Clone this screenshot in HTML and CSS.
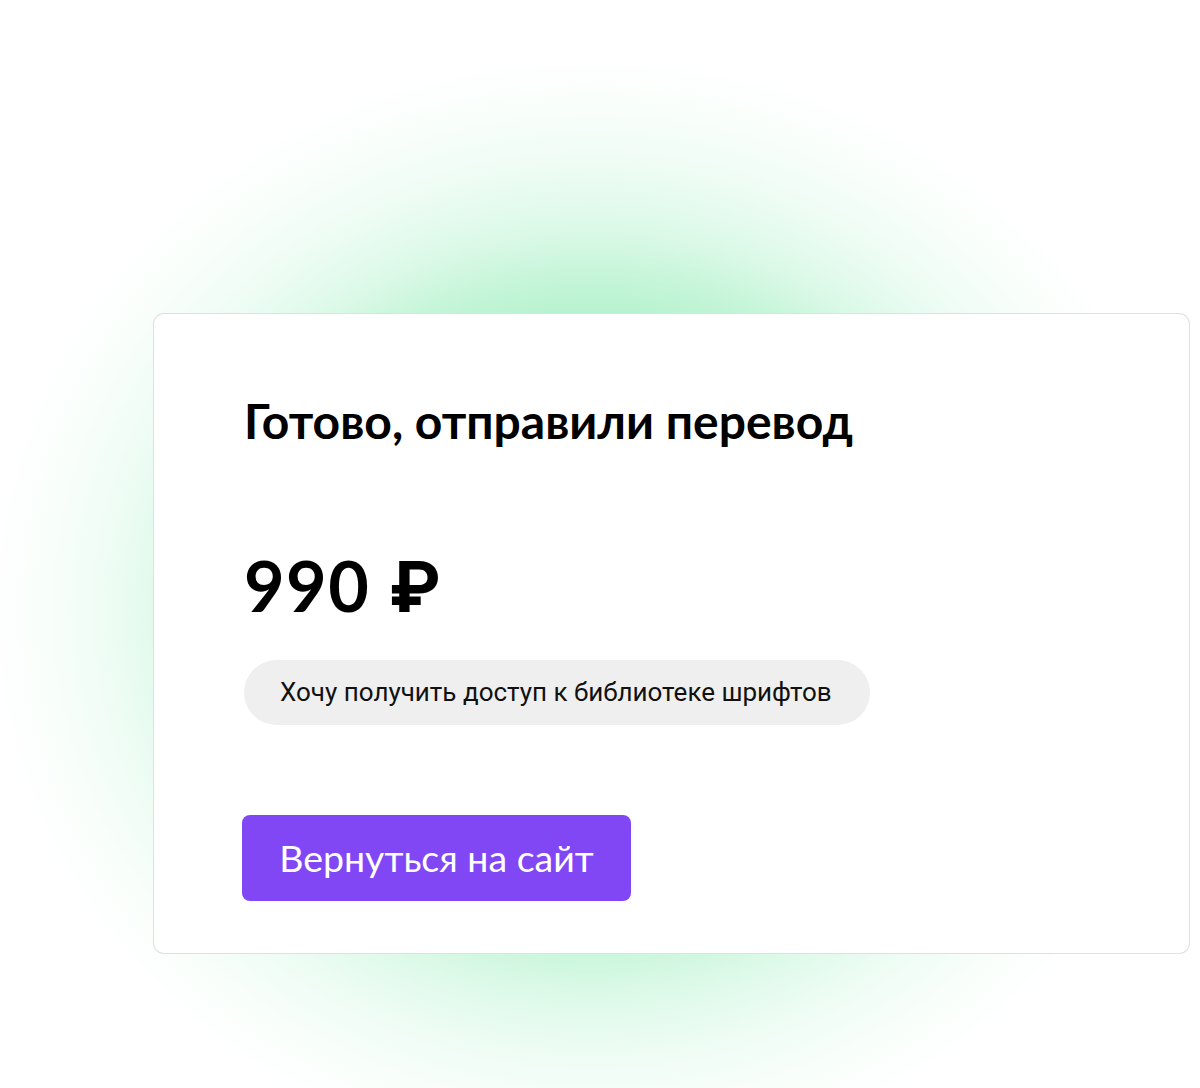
FILE: index.html
```html
<!DOCTYPE html>
<html lang="ru">
<head>
<meta charset="utf-8">
<title>Готово</title>
<link rel="stylesheet" href="styles.css">
</head>
<body>
<main class="page">
  <section class="card">
    <h1 class="title">Готово, отправили перевод</h1>
    <div class="amount">990 ₽</div>
    <div class="note">Хочу получить доступ к библиотеке шрифтов</div>
    <a class="btn" href="#">Вернуться на сайт</a>
  </section>
</main>
</body>
</html>
```
FILE: styles.css
```css
html, body {
  margin: 0;
  padding: 0;
  background: #fff;
}

.page {
  width: 1200px;
  height: 1088px;
  box-sizing: border-box;
  padding: 313px 11px 0 153px;
  background:
    radial-gradient(ellipse 610px 560px at 592px 610px,
      #9be9bb 0%,
      #a6eec3 40%,
      #b1f1cc 50%,
      #c4f5d8 59%,
      #dbf9e7 68%,
      #ecfcf3 78%,
      #f8fefa 89%,
      rgba(255,255,255,0) 100%),
    #fff;
}

.card {
  box-sizing: border-box;
  width: 1037px;
  height: 641px;
  background: #fff;
  border: 1px solid rgba(0, 0, 0, 0.12);
  border-radius: 11px;
  padding: 78px 0 0 90px;
  display: flex;
  flex-direction: column;
  align-items: flex-start;
}

.title {
  margin: 0;
  font-family: "Lato", "Inter", sans-serif;
  font-weight: 700;
  font-size: 48px;
  line-height: 1.2;
  color: #000;
}

.amount {
  margin-top: 93px;
  font-family: "Lato", "Inter", sans-serif;
  font-weight: 700;
  font-size: 70px;
  line-height: 1.2;
  letter-spacing: 1.5px;
  color: #000;
}

.note {
  margin-top: 33px;
  box-sizing: border-box;
  width: 626px;
  height: 65px;
  padding: 0 36px;
  display: flex;
  align-items: center;
  background: #efefef;
  border-radius: 33px;
  font-family: "Roboto", sans-serif;
  font-size: 26px;
  color: #111;
}

.btn {
  margin-top: 90px;
  margin-left: -2px;
  box-sizing: border-box;
  width: 389px;
  height: 86px;
  display: flex;
  align-items: center;
  justify-content: center;
  background: #8247f5;
  border-radius: 8px;
  color: #fff;
  text-decoration: none;
  font-family: "Lato", "Inter", sans-serif;
  font-weight: 400;
  font-size: 37.5px;
}
```
